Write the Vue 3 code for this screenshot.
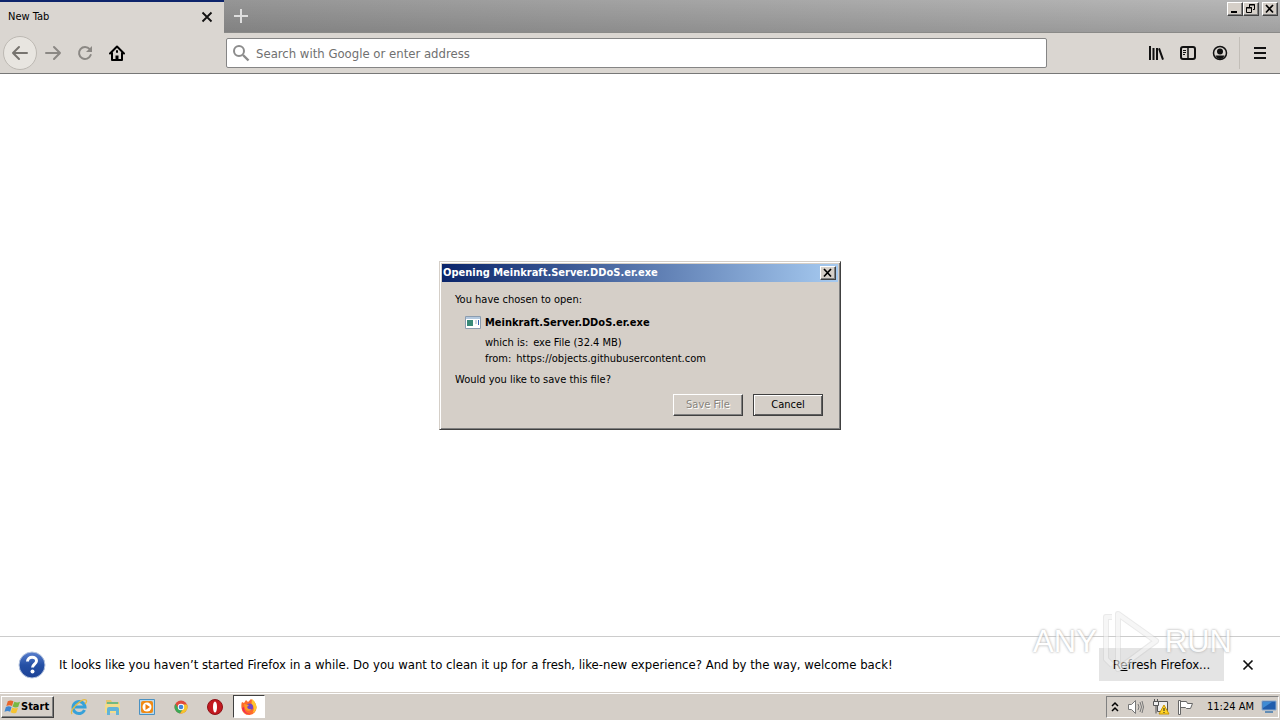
<script setup>
import { ref } from 'vue'

const address = ref('')
const fileName = 'Meinkraft.Server.DDoS.er.exe'
</script>

<template>
  <div class="desktop">
    <header class="tabstrip">
      <div class="tab">
        <span class="tab-title">New Tab</span>
        <button class="plain" aria-label="Close tab">
          <svg width="12" height="12" viewBox="0 0 12 12"><path d="M1.5 1.5l9 9M10.500 1.500l-9 9" stroke="#111" stroke-width="1.800" /></svg>
        </button>
      </div>
      <button class="plain new-tab" aria-label="Open a new tab">
        <svg width="16" height="16" viewBox="0 0 16 16"><path d="M8 1v14M1 8h14" stroke="#dedede" stroke-width="2" /></svg>
      </button>
      <div class="window-controls">
        <button class="caption" aria-label="Minimize"><svg width="12" height="10" viewBox="0 0 12 10"><path d="M2 8h6" stroke="#000" stroke-width="2" /></svg></button>
        <button class="caption" aria-label="Restore"><svg width="12" height="10" viewBox="0 0 12 10" fill="none" stroke="#000"><path d="M4.500 3V.5h5v5H8M4 1h6M1.500 4v4.500h5v-5h-5zM1 4h6" /></svg></button>
        <button class="caption apart" aria-label="Close"><svg width="12" height="10" viewBox="0 0 12 10"><path d="M2 1l7 7.500M9 1L2 8.500" stroke="#000" stroke-width="1.700" /></svg></button>
      </div>
    </header>

    <nav class="toolbar">
      <button class="plain back" aria-label="Back">
        <svg width="18" height="16" viewBox="0 0 18 16" fill="none" stroke="#77746f" stroke-width="2" stroke-linecap="round" stroke-linejoin="round"><path d="M16 8H2M8 2L2 8l6 6" /></svg>
      </button>
      <button class="plain nav" aria-label="Forward">
        <svg width="18" height="16" viewBox="0 0 18 16" fill="none" stroke="#8b8884" stroke-width="2" stroke-linecap="round" stroke-linejoin="round"><path d="M2 8h14M10 2l6 6-6 6" /></svg>
      </button>
      <button class="plain nav" aria-label="Reload">
        <svg width="16" height="16" viewBox="0 0 16 16" fill="none" stroke="#8b8884" stroke-width="2"><path d="M12.700 4.200A6 6 0 1 0 13.700 10" stroke-linecap="round" /><path d="M15 1v6H9z" fill="#8b8884" stroke="none" /></svg>
      </button>
      <button class="plain nav" aria-label="Home">
        <svg width="16" height="16" viewBox="0 0 16 16" fill="none" stroke="#000" stroke-width="2" stroke-linecap="round" stroke-linejoin="round"><path d="M1 8.500L8 1.500l7 7M3 8v7h10V8" /><path d="M8 14.500v-4" stroke-width="3" stroke-linecap="butt" /><path d="M8 6v1" /></svg>
      </button>
      <label class="address">
        <svg width="18" height="18" viewBox="0 0 18 18" fill="none" stroke="#8c8c8c" stroke-width="2"><circle cx="7" cy="7" r="5" /><path d="M11 11l5.500 5.500" stroke-width="2.400" /></svg>
        <input v-model="address" type="text" placeholder="Search with Google or enter address" aria-label="Search with Google or enter address" />
      </label>
      <div class="tools">
        <button class="plain nav" aria-label="Library">
          <svg width="16" height="16" viewBox="0 0 16 16" stroke="#111" stroke-width="2"><path d="M2 1v14M5.500 3v12M9 3v12M11 3.300l4 11.400" /></svg>
        </button>
        <button class="plain nav" aria-label="Sidebars">
          <svg width="16" height="16" viewBox="0 0 16 16" fill="none" stroke="#111"><rect x="1" y="2" width="14" height="12" rx="2" stroke-width="2" /><path d="M8 2v12" stroke-width="1.500" /><path d="M3 5.500h3M3 7.500h3M3 9.500h2" /></svg>
        </button>
        <button class="plain nav" aria-label="Account">
          <svg width="16" height="16" viewBox="0 0 16 16"><circle cx="8" cy="8" r="6.500" fill="none" stroke="#111" stroke-width="1.500" /><circle cx="8" cy="6.500" r="3" fill="#111" /><path d="M3.500 10.500h9C11.500 13 10 14 8 14s-3.500-1-4.500-3.500z" fill="#111" /></svg>
        </button>
        <button class="plain menu" aria-label="Open menu">
          <svg width="14" height="14" viewBox="0 0 14 14"><path d="M1 2h12M1 7h12M1 12h12" stroke="#111" stroke-width="2" /></svg>
        </button>
      </div>
    </nav>

    <main class="page"></main>

    <section class="notice">
      <svg width="28" height="28" viewBox="0 0 28 28">
        <defs><linearGradient id="help" x2="0" y2="1"><stop stop-color="#5a80cf" /><stop offset=".5" stop-color="#2550a5" /><stop offset="1" stop-color="#1c4296" /></linearGradient></defs>
        <circle cx="14" cy="14" r="13" fill="url(#help)" stroke="#b5c4de" />
        <path d="M9.500 10.500C9.500 4.800 18.800 5 18.500 10c-.2 3-4 3.200-4 6.500" fill="none" stroke="#fff" stroke-width="3" />
        <circle cx="14.500" cy="20.500" r="2" fill="#fff" />
      </svg>
      <p>It looks like you haven’t started Firefox in a while. Do you want to clean it up for a fresh, like-new experience? And by the way, welcome back!</p>
      <button class="refresh">R<u>e</u>fresh Firefox...</button>
      <button class="plain dismiss" aria-label="Close message">
        <svg width="12" height="12" viewBox="0 0 12 12"><path d="M1.500 1.500l9 9M10.500 1.500l-9 9" stroke="#111" stroke-width="1.700" /></svg>
      </button>
    </section>

    <footer class="taskbar">
      <button class="start">
        <svg width="17" height="16" viewBox="0 0 18 16">
          <path d="M4 2q3-2 6 0L8.500 7Q6 5.500 2.500 7z" fill="#e8652a" /><path d="M11 2.500q3 1.500 6 0L15 8q-3 1-6-.5z" fill="#78b843" />
          <path d="M2 8q3-1.500 6 0l-1.500 5Q4 11.500.5 13z" fill="#3e86d0" /><path d="M8.800 8.500q3 1.500 6 .5L13 14q-3 1.300-6-.5z" fill="#f5c331" />
        </svg>
        Start
      </button>
      <div class="apps">
        <button class="app" aria-label="Internet Explorer">
          <svg width="18" height="18" viewBox="0 0 18 18" fill="none"><path d="M14.500 12A6 6 0 1 1 15 9H5" stroke="#36a1d9" stroke-width="3" /><path d="M2 16C-1 12 12 0 16 2c1 1 0 3-1 4" stroke="#e4bb42" stroke-width="1.300" /></svg>
        </button>
        <button class="app" aria-label="Windows Explorer">
          <svg width="18" height="18" viewBox="0 0 18 18"><path d="M2 2h5l1 2h7v11H2z" fill="#e5c66f" /><path d="M3 4h11v3H3z" fill="#72b980" /><path d="M1 6h15v9H1z" fill="#f2dc8c" /><path d="M3 17v-6q0-2 2-2h8q2 0 2 2v6h-3v-4H6v4z" fill="#62b4d8" /></svg>
        </button>
        <button class="app" aria-label="Media Player">
          <svg width="18" height="18" viewBox="0 0 18 18"><path d="M1.500 1.500h15v15h-15z" fill="#b9d9ed" stroke="#4a91c2" /><rect x="3" y="3" width="12" height="12" rx="2" fill="#f08a15" /><circle cx="9" cy="9" r="4.500" fill="#fff" /><path d="M7.500 6v6l4.500-3z" fill="#ed7d0d" /></svg>
        </button>
        <button class="app" aria-label="Chrome">
          <svg width="18" height="18" viewBox="0 0 18 18"><circle cx="9" cy="9" r="6.500" fill="#e04a3c" /><path d="M3.400 5.700A6.500 6.500 0 0 0 8 15.400l3-4.400-4.500-.5z" fill="#3ba957" /><path d="M8 15.400A6.500 6.500 0 0 0 15 6.500H9l2.500 4z" fill="#f4c52c" /><circle cx="9" cy="9" r="3.200" fill="#fff" /><circle cx="9" cy="9" r="2.300" fill="#4285d8" /></svg>
        </button>
        <button class="app" aria-label="Opera">
          <svg width="18" height="18" viewBox="0 0 18 18"><circle cx="9" cy="9" r="7.500" fill="#c31920" stroke="#8e1117" /><ellipse cx="9" cy="9" rx="2" ry="5.500" fill="#fff" /></svg>
        </button>
        <button class="app active" aria-label="Firefox">
          <svg width="18" height="18" viewBox="0 0 18 18"><path d="M2 4l2 1 2-3 2 2 3-3q5 3 5.500 8A7.500 7.500 0 0 1 1.500 10Q1 6 2 4z" fill="#ff6b2b" /><path d="M12 1q5 4 4.500 9-1 4-4 5 3-6-1-9z" fill="#ffc52f" /><path d="M2 10q2 7 9 6-7 0-7-7z" fill="#ed255f" /><circle cx="9.500" cy="9" r="3.500" fill="#7245c8" /><path d="M4 6l5 1-2 2q1 3 5 2-3 4-7 0z" fill="#ff9a27" /></svg>
        </button>
      </div>
      <div class="tray">
        <svg width="10" height="14" viewBox="0 0 10 14" fill="none" stroke="#000" stroke-width="1.500"><path d="M2 6l3-3 3 3M2 11l3-3 3 3" /></svg>
        <svg width="18" height="16" viewBox="0 0 18 16" fill="#fff" stroke="#777"><path d="M1.500 5.500h3l4-4v13l-4-4h-3z" /><path d="M11 5q2 3 0 6M13 3q3 5 0 10M15 2q3 6 0 12" fill="none" /></svg>
        <svg width="18" height="16" viewBox="0 0 18 16" fill="#eee" stroke="#555"><path d="M5.500 2.500h10v10h-10z" /><path d="M1.500 2.500h5v4h-5zM4 6.500v8M2.500 0v2M5.500 0v2" /><path d="M12 6l5 9H7z" fill="#ffd427" stroke="#c99500" /><path d="M12 9v3M12 13v1" stroke="#222" /></svg>
        <svg width="18" height="16" viewBox="0 0 18 16" fill="#fff" stroke="#666"><path d="M3.500 2.500h6l1 2h5l-2 5h-4l-1-1h-5M1.500 1.500h2v14h-2z" /></svg>
        <time>11:24 AM</time>
        <svg width="16" height="14" viewBox="0 0 16 14"><path d="M1 1h14v9H1z" fill="#215dac" stroke="#8cabce" /><path d="M2 2h9L2 8z" fill="#3f8bd4" /><path d="M4 12h8" stroke="#638db5" stroke-width="2" /></svg>
      </div>
    </footer>

    <div class="modal-layer">
      <section class="dialog" role="dialog" aria-labelledby="dialog-title">
        <header class="titlebar">
          <h1 id="dialog-title">Opening {{ fileName }}</h1>
          <button class="caption" aria-label="Close dialog"><svg width="12" height="10" viewBox="0 0 12 10"><path d="M2 1l7 7.500M9 1L2 8.500" stroke="#000" stroke-width="1.700" /></svg></button>
        </header>
        <div class="dialog-body">
          <p>You have chosen to open:</p>
          <div class="file">
            <svg width="16" height="13" viewBox="0 0 16 13"><path d="M.5 .5h15v12H.5z" fill="#fff" stroke="#8b9caf" /><path d="M1 2h14" stroke="#b4c9df" stroke-width="2" /><path d="M2 4h6v6H2z" fill="#388a78" /><path d="M10 5h2M10 7h2" stroke="#9baebf" /><path d="M13.500 4v5" stroke="#3462b5" /></svg>
            <strong>{{ fileName }}</strong>
            <dl>
              <div><dt>which is:</dt><dd>exe File (32.4 MB)</dd></div>
              <div><dt>from:</dt><dd>https://objects.githubusercontent.com</dd></div>
            </dl>
          </div>
          <p>Would you like to save this file?</p>
          <div class="actions">
            <button class="classic" disabled>Save File</button>
            <button class="classic default">Cancel</button>
          </div>
        </div>
      </section>
    </div>

    <div class="watermark">
      <span>ANY</span>
      <svg width="60" height="66" viewBox="0 0 60 66" fill="none" stroke-linejoin="round">
        <g stroke="#ccc" stroke-opacity=".5" stroke-width="6"><path d="M17 5l38 27-38 28zM11 8H5v42l6 6" /></g>
        <g stroke="#fff" stroke-opacity=".6" stroke-width="4"><path d="M17 5l38 27-38 28zM11 8H5v42l6 6" /></g>
      </svg>
      <span>RUN</span>
    </div>
  </div>
</template>

<style>
body { margin: 0; }
</style>

<style scoped>
* { box-sizing: border-box; }
.desktop {
  position: relative;
  display: flex;
  flex-direction: column;
  min-height: 100vh;
  overflow: hidden;
  background: #fff;
  color: #000;
  font: 11px/14px "DejaVu Sans Condensed", "DejaVu Sans", sans-serif;
}
svg { display: block; flex: none; }
button { margin: 0; padding: 0; border: 0; color: inherit; font: inherit; }
p, h1, dl, dd { margin: 0; }
.plain { display: flex; align-items: center; justify-content: center; background: none; }
.tabstrip { display: flex; height: 33px; background: linear-gradient(#0000 0, #0002 100%), linear-gradient(90deg, #8e8e8e, #b8b8b8); border-bottom: 1px solid #8a8a88; }
.tab { display: flex; align-items: center; justify-content: space-between; width: 224px; height: 33px; padding: 0 11px 2px 8px; border-top: 2px solid #0d246b; background: #dad6d1; }
.new-tab { width: 34px; height: 32px; }
.window-controls { display: flex; margin: 2px 2px 0 auto; }
.caption { display: flex; align-items: center; justify-content: center; width: 16px; height: 14px; background: #d5cfc8; border: 1px solid; border-color: #fff #404040 #404040 #fff; box-shadow: inset -1px -1px #808080; }
.apart { margin-left: 3px; }
.toolbar { display: flex; align-items: center; height: 41px; padding-left: 3px; background: #dad6d1; border-bottom: 1px solid #777; }
.back { width: 34px; height: 34px; border: 1px solid #bdb9b3; border-radius: 50%; background: #e8e5e0; }
.nav { width: 32px; height: 32px; }
.address { display: flex; align-items: center; flex: 1; height: 30px; margin: 0 93px; padding-left: 5px; background: #fff; border: 1px solid #858585; border-radius: 2px; }
.address input { flex: 1; min-width: 0; height: 26px; padding: 0 6px; border: 0; outline: 0; background: none; font: 13px/18px "DejaVu Sans Condensed", sans-serif; }
.address input::placeholder { color: #707070; opacity: 1; }
.tools { display: flex; }
.menu { width: 41px; height: 32px; margin-left: 3px; border-left: 1px solid #c2beb8; }
.page { flex: 1; }
.notice { display: flex; align-items: center; height: 56px; padding: 0 26px 0 18px; border-top: 1px solid #ccc; font-size: 13px; line-height: 18px; }
.notice p { margin: 0 auto 0 13px; }
.refresh { width: 125px; height: 33px; background: #e4e4e4; }
.dismiss { margin-left: 18px; }
.taskbar { display: flex; align-items: center; height: 28px; padding: 0 1px; background: #d5cfc8; border-top: 1px solid #d5cfc8; box-shadow: inset 0 1px #fff; }
.start { display: flex; align-items: center; width: 53px; height: 22px; padding-left: 2px; background: #d5cfc8; border: 1px solid; border-color: #fff #404040 #404040 #fff; box-shadow: inset -1px -1px #808080; font-weight: bold; }
.apps { display: flex; margin-left: 8px; }
.app { display: flex; align-items: center; justify-content: center; width: 34px; height: 23px; background: none; }
.active { width: 32px; margin-left: 1px; background: #fff; border: 1px solid; border-color: #404040 #fff #fff #404040; }
.tray { display: flex; align-items: center; gap: 7px; height: 22px; margin-left: auto; padding: 0 1px 0 3px; border: 1px solid; border-color: #808080 #fff #fff #808080; }
.tray time { margin-left: 5px; }
.modal-layer { position: absolute; inset: 0 0 30px; display: grid; place-items: center; }
.dialog { width: 402px; padding: 2px; background: #d5cfc8; border: 1px solid; border-color: #d5cfc8 #404040 #404040 #d5cfc8; box-shadow: inset 1px 1px #fff, inset -1px -1px #808080; }
.titlebar { display: flex; align-items: center; justify-content: space-between; height: 18px; padding: 0 2px 0 1px; background: linear-gradient(90deg, #0a246a, #a6caf0); color: #fff; }
.titlebar h1 { font: bold 11px/14px "DejaVu Sans Condensed", sans-serif; }
.dialog-body { padding: 11px 15px 11px 13px; }
.file { display: grid; grid-template-columns: 16px 1fr; gap: 6px 4px; align-items: center; padding: 9px 0 5px 10px; }
.file dl { grid-column: 2; }
.file dl div { display: flex; gap: 5px; height: 16px; }
.actions { display: flex; justify-content: flex-end; gap: 10px; margin-top: 7px; }
.classic { width: 70px; height: 22px; background: #d5cfc8; border: 1px solid; border-color: #fff #404040 #404040 #fff; box-shadow: inset -1px -1px #808080; }
.classic:disabled { color: #88847c; text-shadow: 1px 1px #fff; }
.default { border-color: #404040; box-shadow: inset 1px 1px #fff, inset -1px -1px #606060; }
.watermark { position: absolute; right: 48px; bottom: 45px; display: flex; align-items: center; gap: 4px; color: #fff; font: 31px/38px "Liberation Sans Narrow", "Liberation Sans", sans-serif; text-shadow: 0 0 2px #aaa, 0 0 3px #bbb; opacity: 0.8; pointer-events: none; }
</style>
